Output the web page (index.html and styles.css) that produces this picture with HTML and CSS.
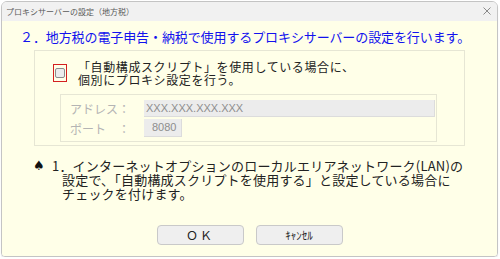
FILE: index.html
```html
<!DOCTYPE html>
<html lang="ja">
<head>
<meta charset="utf-8">
<link rel="stylesheet" href="styles.css">
</head>
<body>
<div class="window">
  <div class="titlebar">
    <span class="title">プロキシサーバーの設定（地方税）</span>
    <svg class="close" width="8" height="8" viewBox="0 0 8 8"><path d="M0.5 0.5L7.5 7.5M7.5 0.5L0.5 7.5" stroke="#8a8a8a" stroke-width="1" fill="none"/></svg>
  </div>
  <div class="panel">
    <div class="heading">２．地方税の電子申告・納税で使用するプロキシサーバーの設定を行います。</div>
    <div class="group">
      <div class="checkrow">
        <span class="focus"><span class="box"></span></span>
        <div class="checktext">「自動構成スクリプト」を使用している場合に、<br>個別にプロキシ設定を行う。</div>
      </div>
      <div class="inner">
        <div class="field">
          <span class="label">アドレス：</span>
          <span class="input wide">XXX.XXX.XXX.XXX</span>
        </div>
        <div class="field">
          <span class="label">ポート　：</span>
          <span class="input narrow">8080</span>
        </div>
      </div>
    </div>
    <div class="note">
      <span class="spade">♠</span>
      <div class="notetext">1．インターネットオプションのローカルエリアネットワーク(LAN)の<br>設定で、「自動構成スクリプトを使用する」と設定している場合に<br>チェックを付けます。</div>
    </div>
    <div class="buttons">
      <button class="btn ok">ＯＫ</button>
      <button class="btn cancel">ｷｬﾝｾﾙ</button>
    </div>
  </div>
</div>
</body>
</html>
```

FILE: styles.css
```css
html, body {
  margin: 0;
  padding: 0;
  background: #ffffff;
}
body {
  font-family: "Noto Sans CJK JP", "Noto Sans", sans-serif;
  color: #222222;
}
.window {
  margin: 1px 0 0 1px;
  width: 495px;
  height: 254px;
  border: 1px solid #c4c4c4;
  border-radius: 6px 6px 4px 4px;
  overflow: hidden;
  display: flex;
  flex-direction: column;
  box-shadow: 0 1px 1px rgba(0,0,0,0.12);
}
.titlebar {
  height: 19px;
  background: #f1f1f1;
  display: flex;
  align-items: center;
  justify-content: space-between;
  padding: 0 6px 0 4px;
  flex: none;
}
.title {
  font-size: 8px;
  color: #5a5a5a;
  line-height: 19px;
}
.close {
  display: block;
  margin-top: -1px;
}
.panel {
  flex: 1;
  background: #ffffe8;
  display: flex;
  flex-direction: column;
  padding: 8px 0 11px 0;
}
.heading {
  margin-left: 18px;
  font-size: 13px;
  line-height: 16px;
  color: #1212ee;
  letter-spacing: -0.1px;
  white-space: nowrap;
}
.group {
  margin: 5px 0 0 32px;
  width: 429px;
  height: 94px;
  border: 1px solid #e6e6d4;
}
.checkrow {
  display: flex;
  align-items: flex-start;
  padding: 9px 0 0 18px;
}
.focus {
  margin-top: 4px;
  width: 12px;
  height: 16px;
  border: 1px solid #d42020;
  display: flex;
  align-items: center;
  justify-content: center;
  flex: none;
}
.box {
  width: 8px;
  height: 8px;
  border: 1px solid #8c8c8c;
  border-radius: 2px;
  background: #ececec;
}
.checktext {
  margin-left: 11px;
  font-size: 12px;
  line-height: 13px;
  letter-spacing: 0.6px;
  white-space: nowrap;
}
.inner {
  margin: 8px 0 0 25px;
  width: 375px;
  border: 1px solid #e6e6d4;
  padding-top: 5px;
  box-sizing: content-box;
  height: 41px;
  display: flex;
  flex-direction: column;
  gap: 2px;
}
.field {
  display: flex;
  align-items: center;
  padding-left: 9px;
}
.label {
  width: 74px;
  font-size: 12px;
  color: #b4b4b4;
  white-space: nowrap;
  line-height: 17px;
}
.input {
  height: 17px;
  box-sizing: border-box;
  background: #ececec;
  border-bottom: 1px solid #dcdcdc;
  border-right: 1px solid #dcdcdc;
  font-family: "Liberation Sans", sans-serif;
  font-size: 11px;
  line-height: 16px;
  color: #8e8e8e;
  padding-left: 2px;
}
.input.wide {
  width: 291px;
}
.input.narrow {
  width: 38px;
  height: 18px;
  padding-left: 8px;
}
.note {
  margin: 13px 0 0 31px;
  display: flex;
  align-items: flex-start;
}
.spade {
  font-size: 13px;
  line-height: 14px;
  color: #111111;
  width: 19px;
  flex: none;
  font-family: "DejaVu Sans", sans-serif;
}
.notetext {
  font-size: 13px;
  line-height: 14px;
  letter-spacing: 0.2px;
  padding-left: 10px;
  text-indent: -10px;
  white-space: nowrap;
}
.buttons {
  margin-top: auto;
  display: flex;
  justify-content: center;
  gap: 12px;
}
.btn {
  width: 87px;
  height: 20px;
  box-sizing: border-box;
  background: #efefef;
  border: 1px solid #c9c9c9;
  border-radius: 4px;
  font-family: "Noto Sans CJK JP", sans-serif;
  color: #222222;
  padding: 0;
  line-height: 18px;
}
.btn.ok {
  font-size: 12px;
  letter-spacing: 2px;
}
.btn.cancel {
  font-size: 11px;
}
```
